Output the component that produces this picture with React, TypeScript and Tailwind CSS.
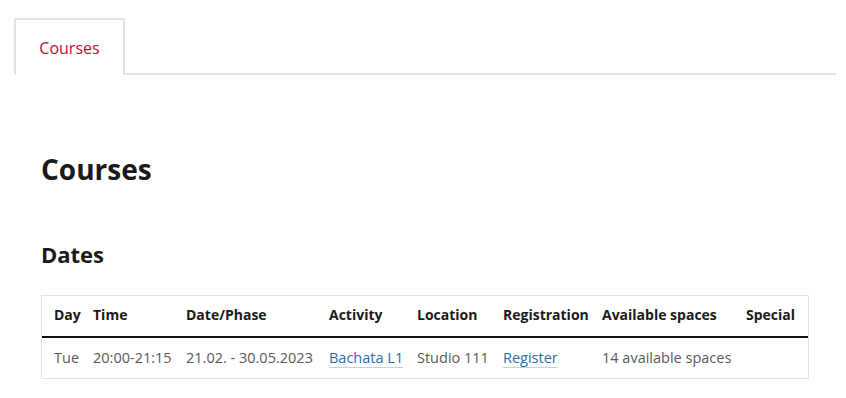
import React from "react"

type Row = {
  day: string
  time: string
  phase: string
  activity: string
  location: string
  registration: string
  spaces: string
  special: string
}

const columns = ["Day", "Time", "Date/Phase", "Activity", "Location", "Registration", "Available spaces", "Special"]

const rows: Row[] = [
  {
    day: "Tue",
    time: "20:00-21:15",
    phase: "21.02. - 30.05.2023",
    activity: "Bachata L1",
    location: "Studio 111",
    registration: "Register",
    spaces: "14 available spaces",
    special: "",
  },
]

const grid = "grid grid-cols-[45px_93px_143px_88px_86px_99px_144px_1fr]"

export default function App() {
  return (
    <div className="min-h-screen bg-white text-[#555]" style={{ fontFamily: '"Open Sans", "Noto Sans", sans-serif' }}>
      {/* Tabs */}
      <div className="pt-[18px] pl-[14px] pr-[10px]">
        <div className="flex border-b-2 border-[#e3e3e3]">
          <div className="-mb-[2px] w-[111px] h-[57px] border-2 border-b-0 border-[#e3e3e3] bg-white flex items-center justify-center">
            <span className="text-[16px] text-[#c20f2f]">Courses</span>
          </div>
        </div>
      </div>

      <div className="pl-[41px] pr-[37px]">
        <h1 className="mt-[74px] text-[28px] leading-[40px] font-bold text-[#1a1a1a]">Courses</h1>
        <h2 className="mt-[50px] text-[22px] leading-[30px] font-bold text-[#1a1a1a]">Dates</h2>

        {/* Table */}
        <div className="mt-[26px] border border-[#e1e1e1]">
          <div className={`${grid} h-[42px] pb-[3px] items-center border-b-2 border-[#111] text-[14px] font-bold text-[#1a1a1a]`}>
            {columns.map((c, i) => (
              <div key={c} className={i === 0 ? "pl-[12px]" : "pl-[6px]"}>{c}</div>
            ))}
          </div>
          {rows.map(r => (
            <div key={r.activity} className={`${grid} h-[40px] items-center text-[14.5px] text-[#5a5a5a]`}>
              <div className="pl-[12px]">{r.day}</div>
              <div className="pl-[6px]">{r.time}</div>
              <div className="pl-[6px]">{r.phase}</div>
              <div className="pl-[6px]">
                <a href="#" className="text-[#1f6fae] border-b border-[#b9d3ea] leading-[18px] inline-block">{r.activity}</a>
              </div>
              <div className="pl-[6px]">{r.location}</div>
              <div className="pl-[6px]">
                <a href="#" className="text-[#1f6fae] border-b border-[#b9d3ea] leading-[18px] inline-block">{r.registration}</a>
              </div>
              <div className="pl-[6px]">{r.spaces}</div>
              <div className="pl-[6px]">{r.special}</div>
            </div>
          ))}
        </div>
      </div>
    </div>
  )
}
